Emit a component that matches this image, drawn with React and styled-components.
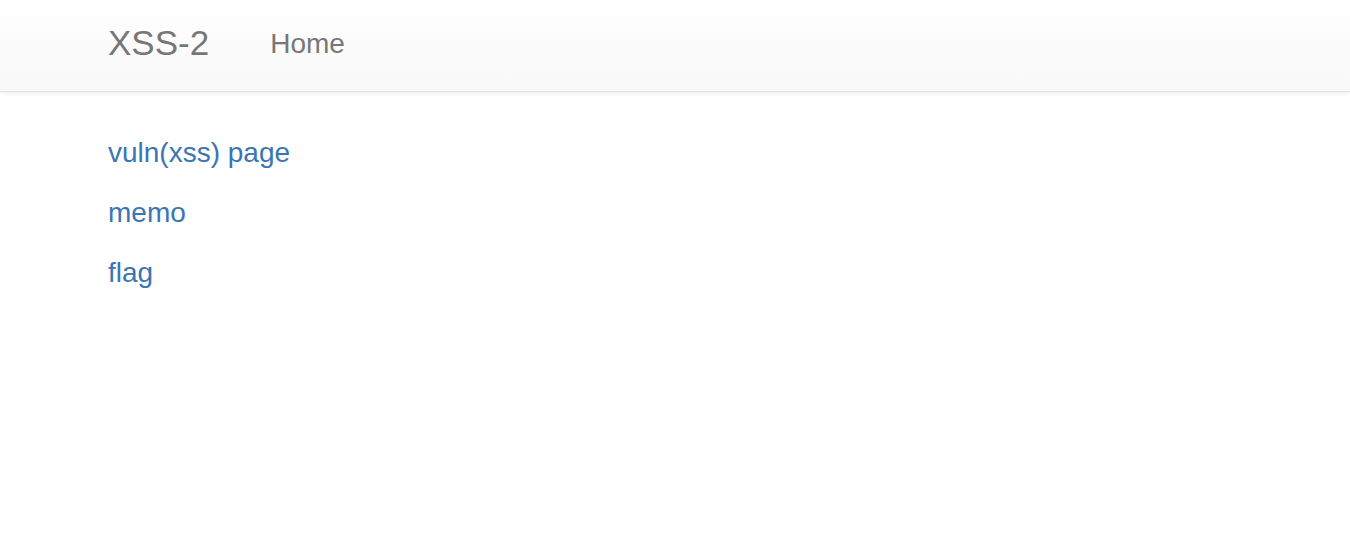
import React from "react";
import styled, { createGlobalStyle } from "styled-components";

const Global = createGlobalStyle`
  html, body { margin: 0; padding: 0; background: #fff; }
  body { font-family: "Liberation Sans", Arial, sans-serif; font-size: 28px; color: #333; }
`;

const Navbar = styled.nav`
  height: 85px;
  padding-bottom: 6px;
  border-bottom: 1px solid #e2e2e2;
  background-image: linear-gradient(to bottom, #ffffff 0%, #f8f8f8 100%);
  box-shadow: 0 1px 5px rgba(0, 0, 0, 0.075);
  display: flex;
  align-items: center;
  padding-left: 108px;
  box-sizing: content-box;
`;

const Brand = styled.a`
  font-size: 35px;
  color: #777;
  text-decoration: none;
  margin-right: 61px;
  line-height: 1;
`;

const NavLink = styled.a`
  font-size: 28px;
  color: #777;
  text-decoration: none;
  line-height: 1;
  padding-top: 2px;
`;

const Container = styled.main`
  padding: 41px 0 0 108px;
  display: flex;
  flex-direction: column;
  gap: 20px;
  align-items: flex-start;
`;

const Link = styled.a`
  font-size: 28px;
  line-height: 40px;
  color: #3a75b4;
  text-decoration: none;
`;

export default function App() {
  return (
    <>
      <Global />
      <Navbar>
        <Brand href="#">XSS-2</Brand>
        <NavLink href="#">Home</NavLink>
      </Navbar>
      <Container>
        <Link href="#">vuln(xss) page</Link>
        <Link href="#">memo</Link>
        <Link href="#">flag</Link>
      </Container>
    </>
  );
}
